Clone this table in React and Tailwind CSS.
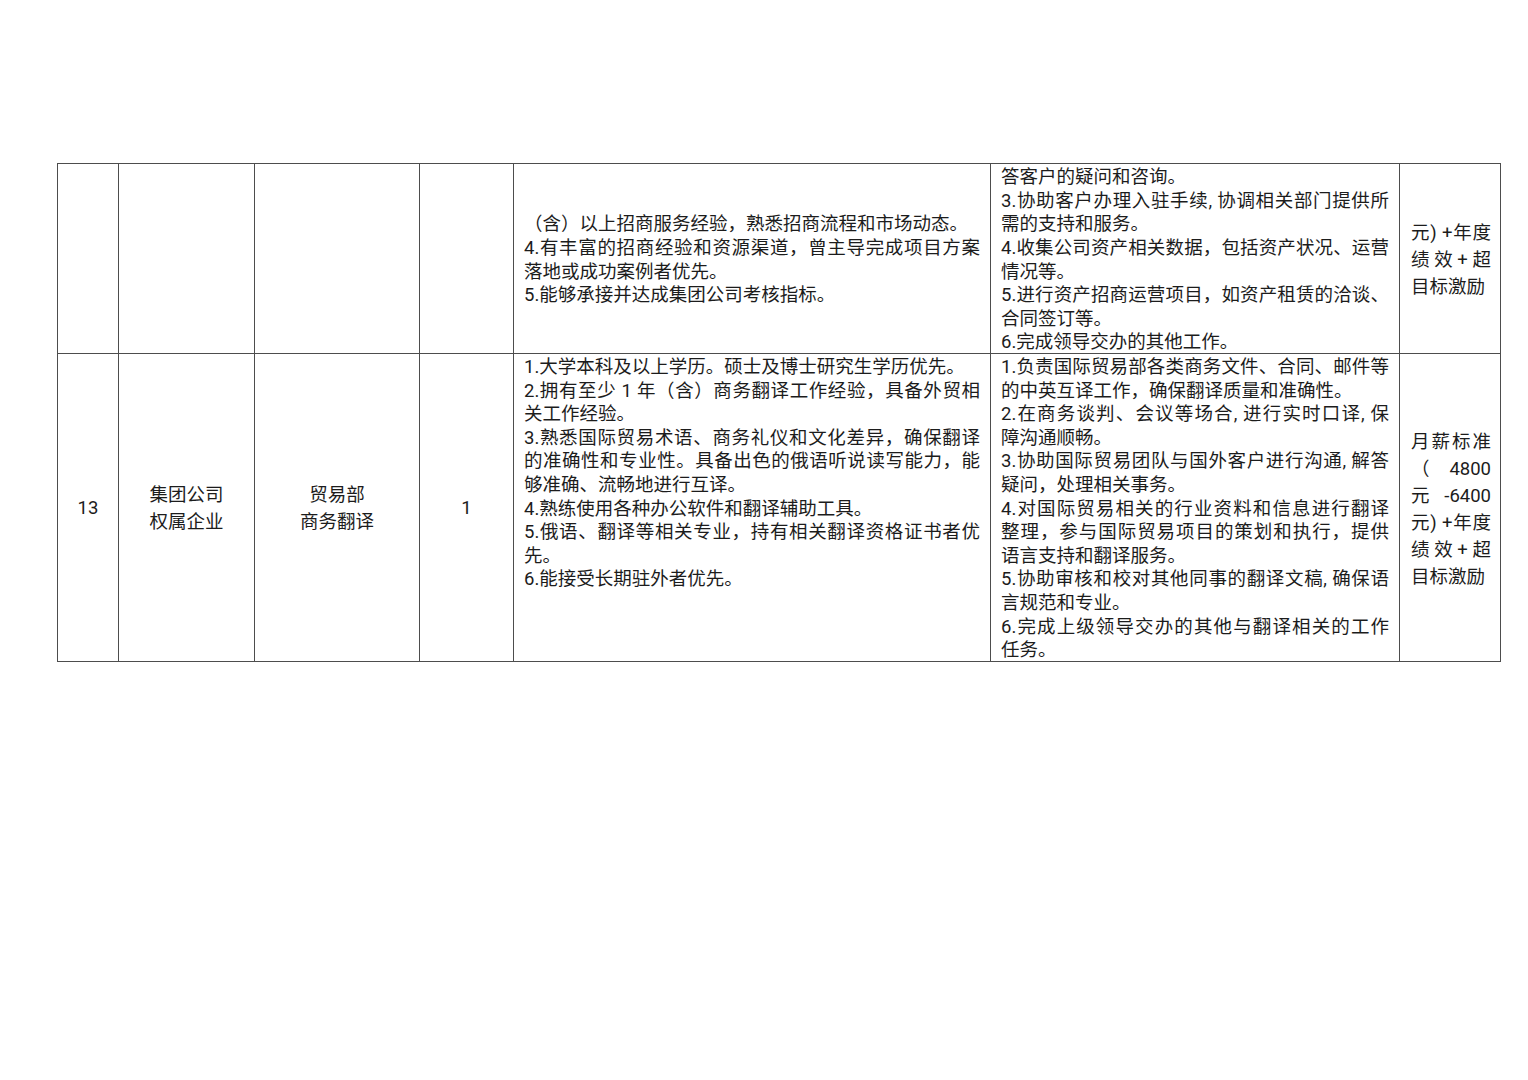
import React from 'react';

// each paragraph is a list of lines; every line but the last one of a paragraph is justified
const row1Req = [
  ['（含）以上招商服务经验，熟悉招商流程和市场动态。'],
  ['4.有丰富的招商经验和资源渠道，曾主导完成项目方案', '落地或成功案例者优先。'],
  ['5.能够承接并达成集团公司考核指标。'],
];

const row1Duty = [
  ['答客户的疑问和咨询。'],
  ['3.协助客户办理入驻手续, 协调相关部门提供所', '需的支持和服务。'],
  ['4.收集公司资产相关数据，包括资产状况、运营', '情况等。'],
  ['5.进行资产招商运营项目，如资产租赁的洽谈、', '合同签订等。'],
  ['6.完成领导交办的其他工作。'],
];

const row2Req = [
  ['1.大学本科及以上学历。硕士及博士研究生学历优先。'],
  ['2.拥有至少 1 年（含）商务翻译工作经验，具备外贸相', '关工作经验。'],
  [
    '3.熟悉国际贸易术语、商务礼仪和文化差异，确保翻译',
    '的准确性和专业性。具备出色的俄语听说读写能力，能',
    '够准确、流畅地进行互译。',
  ],
  ['4.熟练使用各种办公软件和翻译辅助工具。'],
  ['5.俄语、翻译等相关专业，持有相关翻译资格证书者优', '先。'],
  ['6.能接受长期驻外者优先。'],
];

const row2Duty = [
  ['1.负责国际贸易部各类商务文件、合同、邮件等', '的中英互译工作，确保翻译质量和准确性。'],
  ['2.在商务谈判、会议等场合, 进行实时口译, 保', '障沟通顺畅。'],
  ['3.协助国际贸易团队与国外客户进行沟通, 解答', '疑问，处理相关事务。'],
  [
    '4.对国际贸易相关的行业资料和信息进行翻译',
    '整理，参与国际贸易项目的策划和执行，提供',
    '语言支持和翻译服务。',
  ],
  ['5.协助审核和校对其他同事的翻译文稿, 确保语', '言规范和专业。'],
  ['6.完成上级领导交办的其他与翻译相关的工作', '任务。'],
];

const row1Pay = [['元) +年度', '绩效+超', '目标激励']];
const row2Pay = [['月薪标准', '（ 4800', '元 -6400', '元) +年度', '绩效+超', '目标激励']];

function Lines({ paras }) {
  return (
    <div className="translate-y-[2px]">
      {paras.map((lines, i) => (
        <div key={i}>
          {lines.map((line, j) =>
            j < lines.length - 1 ? (
              <div key={j} className="whitespace-nowrap text-justify [text-align-last:justify]">
                {line}
              </div>
            ) : (
              <div key={j} className="whitespace-nowrap text-left">
                {line}
              </div>
            )
          )}
        </div>
      ))}
    </div>
  );
}

const cell = 'border border-[#4d4d4d] p-0';

export default function App() {
  return (
    <div className="w-[1528px] h-[1080px] bg-white pt-[163px] pl-[57px] text-[#1c1c1c] text-[18.5px] font-['Roboto','Noto_Sans_CJK_SC',sans-serif]">
      <table className="table-fixed border-collapse w-[1443px]">
        <colgroup>
          <col className="w-[61px]" />
          <col className="w-[136px]" />
          <col className="w-[165px]" />
          <col className="w-[94px]" />
          <col className="w-[477px]" />
          <col className="w-[409px]" />
          <col className="w-[101px]" />
        </colgroup>
        <tbody>
          <tr className="h-[190px]">
            <td className={cell}></td>
            <td className={cell}></td>
            <td className={cell}></td>
            <td className={cell}></td>
            <td className={`${cell} align-middle px-[10px] leading-[23.6px]`}>
              <Lines paras={row1Req} />
            </td>
            <td className={`${cell} align-middle px-[10px] leading-[23.6px]`}>
              <Lines paras={row1Duty} />
            </td>
            <td className={`${cell} align-middle pl-[11px] pr-[9px] leading-[27px]`}>
              <Lines paras={row1Pay} />
            </td>
          </tr>
          <tr className="h-[308px]">
            <td className={`${cell} align-middle text-center`}>
              <div className="translate-y-[1px]">13</div>
            </td>
            <td className={`${cell} align-middle text-center leading-[27px]`}>
              <div className="translate-y-[1px]">
                <div>集团公司</div>
                <div>权属企业</div>
              </div>
            </td>
            <td className={`${cell} align-middle text-center leading-[27px]`}>
              <div className="translate-y-[1px]">
                <div>贸易部</div>
                <div>商务翻译</div>
              </div>
            </td>
            <td className={`${cell} align-middle text-center`}>
              <div className="translate-y-[1px]">1</div>
            </td>
            <td className={`${cell} align-top px-[10px] leading-[23.6px]`}>
              <Lines paras={row2Req} />
            </td>
            <td className={`${cell} align-top px-[10px] leading-[23.6px]`}>
              <Lines paras={row2Duty} />
            </td>
            <td className={`${cell} align-middle pl-[11px] pr-[9px] leading-[27px]`}>
              <Lines paras={row2Pay} />
            </td>
          </tr>
        </tbody>
      </table>
    </div>
  );
}
